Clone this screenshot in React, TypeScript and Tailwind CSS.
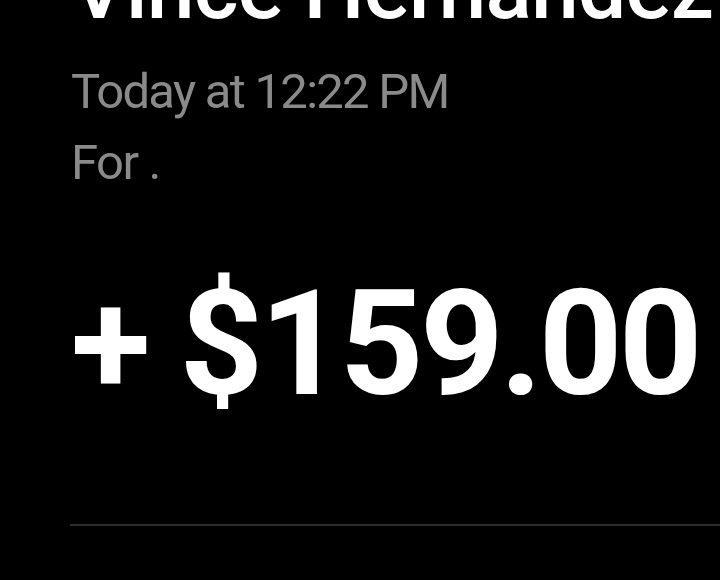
import React from 'react';

const App: React.FC = () => {
  return (
    <div className="w-[720px] h-[580px] bg-black overflow-hidden pl-[71px]" style={{ fontFamily: 'Roboto, "Liberation Sans", sans-serif' }}>
      <div className="flex flex-col">
        <h1 className="mt-[-54px] text-[86px] leading-none font-medium text-white whitespace-nowrap tracking-[-0.01em]">
          Vince Hernandez
        </h1>
        <p className="mt-[35px] text-[49px] leading-none text-[#8a8a8a] whitespace-nowrap tracking-[-0.035em]">
          Today at 12:22 PM
        </p>
        <p className="mt-[22px] text-[49px] leading-none text-[#8a8a8a] whitespace-nowrap tracking-[-0.03em]">
          For .
        </p>
        <div className="mt-[85px] text-[146px] leading-none font-bold text-white whitespace-nowrap tracking-[-0.025em]">
          + $159.00
        </div>
        <div className="ml-[-1px] mt-[106px] h-[2px] bg-[#2e2e2e]" />
      </div>
    </div>
  );
};

export default App;
